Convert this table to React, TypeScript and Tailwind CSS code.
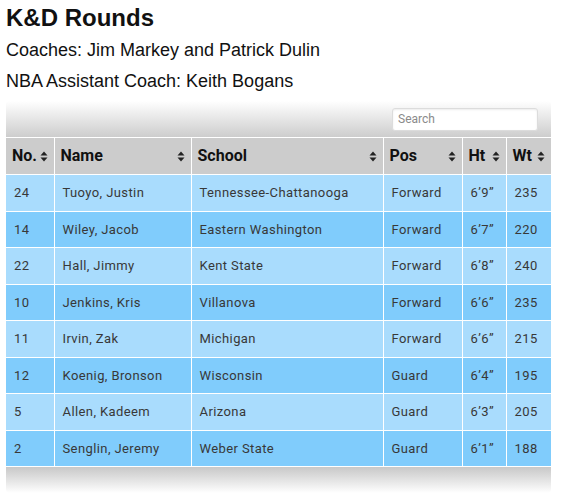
import React from 'react';

type Player = { no: string; name: string; school: string; pos: string; ht: string; wt: string };

const players: Player[] = [
  { no: '24', name: 'Tuoyo, Justin', school: 'Tennessee-Chattanooga', pos: 'Forward', ht: '6\u20199\u201D', wt: '235' },
  { no: '14', name: 'Wiley, Jacob', school: 'Eastern Washington', pos: 'Forward', ht: '6\u20197\u201D', wt: '220' },
  { no: '22', name: 'Hall, Jimmy', school: 'Kent State', pos: 'Forward', ht: '6\u20198\u201D', wt: '240' },
  { no: '10', name: 'Jenkins, Kris', school: 'Villanova', pos: 'Forward', ht: '6\u20196\u201D', wt: '235' },
  { no: '11', name: 'Irvin, Zak', school: 'Michigan', pos: 'Forward', ht: '6\u20196\u201D', wt: '215' },
  { no: '12', name: 'Koenig, Bronson', school: 'Wisconsin', pos: 'Guard', ht: '6\u20194\u201D', wt: '195' },
  { no: '5', name: 'Allen, Kadeem', school: 'Arizona', pos: 'Guard', ht: '6\u20193\u201D', wt: '205' },
  { no: '2', name: 'Senglin, Jeremy', school: 'Weber State', pos: 'Guard', ht: '6\u20191\u201D', wt: '188' },
];

const columns = [
  { label: 'No.', w: 'w-[48px]' },
  { label: 'Name', w: 'w-[137px]' },
  { label: 'School', w: 'w-[192px]' },
  { label: 'Pos', w: 'w-[79px]' },
  { label: 'Ht', w: 'w-[44px]' },
  { label: 'Wt', w: 'w-[45px]' },
];

function SortIcon() {
  return (
    <svg width="8" height="11" viewBox="0 0 8 11" className="shrink-0">
      <path d="M4 0.5 L7.5 4.5 H0.5 Z" fill="#222" />
      <path d="M4 10.5 L7.5 6.5 H0.5 Z" fill="#222" />
    </svg>
  );
}

export default function App() {
  return (
    <div className="w-[564px] h-[499px] bg-white px-[6px] pt-[4px] font-['Liberation_Sans',Arial,sans-serif] text-[#111]">
      <h1 className="text-[24px] font-bold leading-[28px]">K&amp;D Rounds</h1>
      <p className="text-[18px] leading-[31px] mt-[3px]">Coaches: Jim Markey and Patrick Dulin</p>
      <p className="text-[18px] leading-[31px]">NBA Assistant Coach: Keith Bogans</p>

      <div className="w-[545px] mt-[4px] font-['Roboto',sans-serif]">
        {/* toolbar */}
        <div className="h-[36px] rounded-t-[4px] bg-gradient-to-b from-white to-[#cdcdcd] flex items-center justify-end pr-[13px]">
          <input
            placeholder="Search"
            className="w-[146px] h-[23px] rounded-[3px] border border-[#dcdcdc] bg-white px-[5px] text-[12px] text-[#333] placeholder:text-[#8a8a8a] outline-none font-['Roboto',sans-serif] shadow-[inset_0_1px_2px_rgba(0,0,0,0.08)]"
          />
        </div>

        <table className="w-[545px] border-collapse table-fixed">
          <thead>
            <tr className="bg-[#cccccc]">
              {columns.map((c) => (
                <th key={c.label} className={`${c.w} h-[37px] border border-white px-[6px] text-left first:border-l-0 last:border-r-0`}>
                  <div className="flex items-center justify-between">
                    <span className="text-[16px] font-bold text-[#111] leading-none">{c.label}</span>
                    <SortIcon />
                  </div>
                </th>
              ))}
            </tr>
          </thead>
          <tbody>
            {players.map((p, i) => (
              <tr key={p.no} className={i % 2 === 0 ? 'bg-[#a9dcfd]' : 'bg-[#80ccfc]'}>
                {[p.no, p.name, p.school, p.pos, p.ht, p.wt].map((v, j) => (
                  <td
                    key={j}
                    className="h-[36.5px] border border-white px-[8px] text-[13px] text-[#383838] tracking-[0.4px] first:border-l-0 last:border-r-0"
                  >
                    {v}
                  </td>
                ))}
              </tr>
            ))}
          </tbody>
        </table>

        {/* footer */}
        <div className="h-[26px] rounded-b-[4px] bg-gradient-to-b from-[#c8c8c8] to-white" />
      </div>
    </div>
  );
}
